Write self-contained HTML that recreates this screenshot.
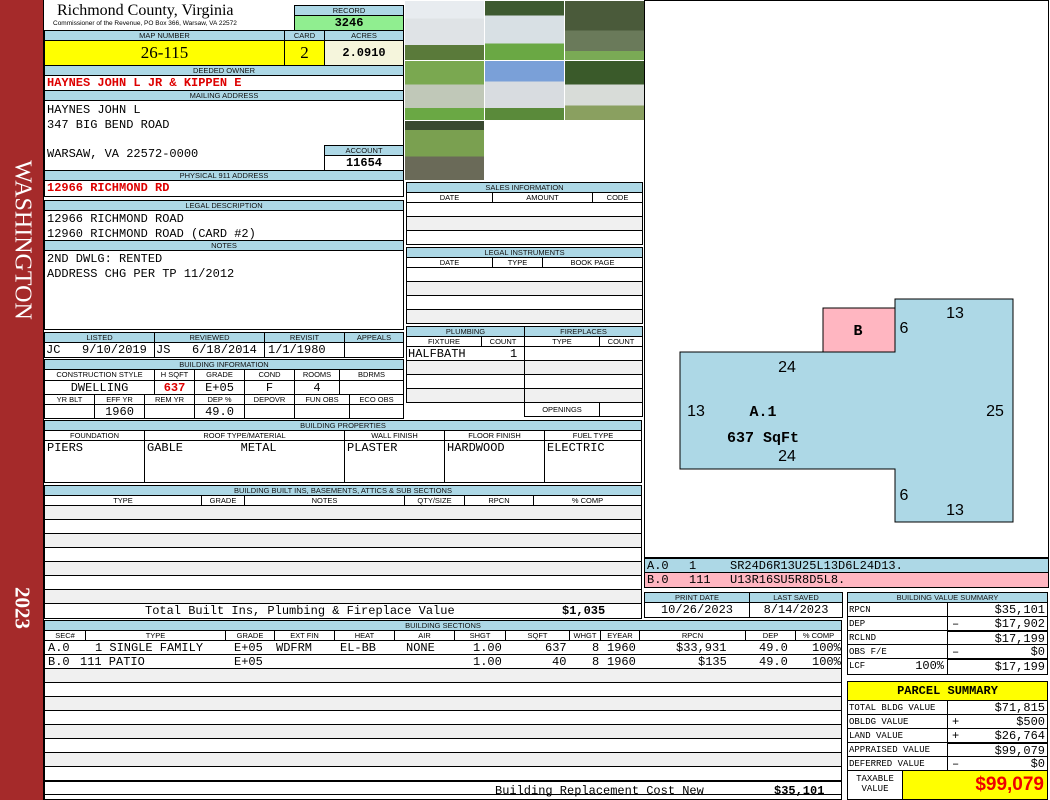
<!DOCTYPE html>
<html><head><meta charset="utf-8"><style>
*{margin:0;padding:0;box-sizing:border-box}
body{width:1050px;height:800px;position:relative;background:#fff;overflow:hidden;font-family:"Liberation Sans",sans-serif}
div{position:absolute}
.b{border:1px solid #000;background:#fff}
.h{background:#add8e6;border:1px solid #000;font-size:7.5px;text-align:center;line-height:9px;color:#111;white-space:nowrap;overflow:hidden}
.m{font-family:"Liberation Mono",monospace;font-size:12px;white-space:nowrap;line-height:14px}
.s{font-size:7.5px;text-align:center;line-height:10px;white-space:nowrap;overflow:hidden;border:1px solid #000;background:#fff}
.r{color:#d00;font-weight:bold}
.g{background:#f0f0f0}
</style></head><body>
<!-- sidebar -->
<div style="left:0;top:0;width:44px;height:800px;background:#a52a2a;border-right:1px solid #000"></div>
<div style="left:22px;top:240px;transform:translate(-50%,-50%) rotate(90deg);color:#fff;font-family:'Liberation Serif',serif;font-size:24px;white-space:nowrap">WASHINGTON</div>
<div style="left:22px;top:608px;transform:translate(-50%,-50%) rotate(90deg);color:#fff;font-family:'Liberation Serif',serif;font-size:21px;font-weight:bold">2023</div>

<!-- header -->
<div style="left:57px;top:2px;font-family:'Liberation Serif',serif;font-size:16px;line-height:18px">Richmond County, Virginia</div>
<div style="left:53px;top:20px;font-size:6.5px;line-height:8px">Commissioner of the Revenue, PO Box 366, Warsaw, VA 22572</div>
<div class="h" style="left:294px;top:5px;width:110px;height:11px">RECORD</div>
<div class="m" style="left:294px;top:15px;width:110px;height:16px;background:#90ee90;border:1px solid #000;text-align:center;font-weight:bold;line-height:14px">3246</div>
<div class="h" style="left:44px;top:30px;width:241px;height:11px">MAP NUMBER</div>
<div class="h" style="left:284px;top:30px;width:41px;height:11px">CARD</div>
<div class="h" style="left:324px;top:30px;width:80px;height:11px">ACRES</div>
<div style="left:44px;top:40px;width:241px;height:26px;background:#ffff00;border:1px solid #000;font-family:'Liberation Serif',serif;font-size:17px;text-align:center;line-height:24px">26-115</div>
<div style="left:284px;top:40px;width:41px;height:26px;background:#ffff00;border:1px solid #000;font-family:'Liberation Serif',serif;font-size:17px;text-align:center;line-height:24px">2</div>
<div class="m" style="left:324px;top:40px;width:80px;height:26px;background:#f5f5dc;border:1px solid #000;text-align:center;font-weight:bold;line-height:24px">2.0910</div>
<div class="h" style="left:44px;top:65px;width:360px;height:11px">DEEDED OWNER</div>
<div class="b m r" style="left:44px;top:75px;width:360px;height:16px;padding-left:2px">HAYNES JOHN L JR &amp; KIPPEN E</div>
<div class="h" style="left:44px;top:90px;width:360px;height:11px">MAILING ADDRESS</div>
<div class="b" style="left:44px;top:100px;width:360px;height:71px"></div>
<div class="m" style="left:47px;top:103px">HAYNES JOHN L</div>
<div class="m" style="left:47px;top:118px">347 BIG BEND ROAD</div>
<div class="m" style="left:47px;top:147px">WARSAW, VA 22572-0000</div>
<div class="h" style="left:324px;top:145px;width:80px;height:11px">ACCOUNT</div>
<div class="b m" style="left:324px;top:155px;width:80px;height:16px;text-align:center;font-weight:bold">11654</div>
<div class="h" style="left:44px;top:170px;width:360px;height:11px">PHYSICAL 911 ADDRESS</div>
<div class="b m r" style="left:44px;top:180px;width:360px;height:17px;padding-left:2px">12966 RICHMOND RD</div>
<div class="h" style="left:44px;top:200px;width:360px;height:11px">LEGAL DESCRIPTION</div>
<div class="b" style="left:44px;top:210px;width:360px;height:31px"></div>
<div class="m" style="left:47px;top:212px">12966 RICHMOND ROAD</div>
<div class="m" style="left:47px;top:227px">12960 RICHMOND ROAD (CARD #2)</div>
<div class="h" style="left:44px;top:240px;width:360px;height:11px">NOTES</div>
<div class="b" style="left:44px;top:250px;width:360px;height:80px"></div>
<div class="m" style="left:47px;top:252px">2ND DWLG: RENTED</div>
<div class="m" style="left:47px;top:267px">ADDRESS CHG PER TP 11/2012</div>

<!-- listed -->
<div class="h" style="left:44px;top:332px;width:111px;height:11px">LISTED</div>
<div class="h" style="left:154px;top:332px;width:111px;height:11px">REVIEWED</div>
<div class="h" style="left:264px;top:332px;width:81px;height:11px">REVISIT</div>
<div class="h" style="left:344px;top:332px;width:60px;height:11px">APPEALS</div>
<div class="b m" style="left:44px;top:342px;width:111px;height:16px;padding-left:1px">JC&nbsp;&nbsp;&nbsp;9/10/2019</div>
<div class="b m" style="left:154px;top:342px;width:111px;height:16px;padding-left:1px">JS&nbsp;&nbsp;&nbsp;6/18/2014</div>
<div class="b m" style="left:264px;top:342px;width:81px;height:16px;padding-left:3px">1/1/1980</div>
<div class="b" style="left:344px;top:342px;width:60px;height:16px"></div>
<div class="h" style="left:44px;top:359px;width:360px;height:11px">BUILDING INFORMATION</div>
<div class="s" style="left:44px;top:369px;width:111px;height:12px">CONSTRUCTION STYLE</div>
<div class="s" style="left:154px;top:369px;width:41px;height:12px">H SQFT</div>
<div class="s" style="left:194px;top:369px;width:51px;height:12px">GRADE</div>
<div class="s" style="left:244px;top:369px;width:51px;height:12px">COND</div>
<div class="s" style="left:294px;top:369px;width:46px;height:12px">ROOMS</div>
<div class="s" style="left:339px;top:369px;width:65px;height:12px">BDRMS</div>
<div class="b m" style="left:44px;top:380px;width:111px;height:15px;text-align:center">DWELLING</div>
<div class="b m r" style="left:154px;top:380px;width:41px;height:15px;text-align:center">637</div>
<div class="b m" style="left:194px;top:380px;width:51px;height:15px;text-align:center">E+05</div>
<div class="b m" style="left:244px;top:380px;width:51px;height:15px;text-align:center">F</div>
<div class="b m" style="left:294px;top:380px;width:46px;height:15px;text-align:center">4</div>
<div class="b" style="left:339px;top:380px;width:65px;height:15px"></div>
<div class="s" style="left:44px;top:394px;width:51px;height:11px">YR BLT</div>
<div class="s" style="left:94px;top:394px;width:51px;height:11px">EFF YR</div>
<div class="s" style="left:144px;top:394px;width:51px;height:11px">REM YR</div>
<div class="s" style="left:194px;top:394px;width:51px;height:11px">DEP %</div>
<div class="s" style="left:244px;top:394px;width:51px;height:11px">DEPOVR</div>
<div class="s" style="left:294px;top:394px;width:56px;height:11px">FUN OBS</div>
<div class="s" style="left:349px;top:394px;width:55px;height:11px">ECO OBS</div>
<div class="b" style="left:44px;top:404px;width:51px;height:15px"></div>
<div class="b m" style="left:94px;top:404px;width:51px;height:15px;text-align:center">1960</div>
<div class="b" style="left:144px;top:404px;width:51px;height:15px"></div>
<div class="b m" style="left:194px;top:404px;width:51px;height:15px;text-align:center">49.0</div>
<div class="b" style="left:244px;top:404px;width:51px;height:15px"></div>
<div class="b" style="left:294px;top:404px;width:56px;height:15px"></div>
<div class="b" style="left:349px;top:404px;width:55px;height:15px"></div>

<!-- photos -->
<div style="left:405px;top:1px;width:79px;height:59px;background:linear-gradient(#e8ecf0 0 30%,#dfe3e6 30% 75%,#5a7a3a 75%)"></div>
<div style="left:485px;top:1px;width:79px;height:59px;background:linear-gradient(#3e5a30 0 25%,#d8e0e4 25% 72%,#6aa844 72%)"></div>
<div style="left:565px;top:1px;width:79px;height:59px;background:linear-gradient(#4a5a3a 0 50%,#6a7a5a 50% 85%,#7aaa55 85%)"></div>
<div style="left:405px;top:61px;width:79px;height:59px;background:linear-gradient(#7aa850 0 40%,#c0c8b8 40% 80%,#6aa844 80%)"></div>
<div style="left:485px;top:61px;width:79px;height:59px;background:linear-gradient(#7aa0d8 0 35%,#d8dce0 35% 80%,#5a8a3a 80%)"></div>
<div style="left:565px;top:61px;width:79px;height:59px;background:linear-gradient(#3a5a2a 0 40%,#d8dcd8 40% 75%,#8aa060 75%)"></div>
<div style="left:405px;top:121px;width:79px;height:59px;background:linear-gradient(#3a4a30 0 15%,#7aa050 15% 60%,#6a6a58 60%)"></div>

<!-- sales -->
<div class="b" style="left:406px;top:182px;width:237px;height:63px"></div>
<div class="h" style="left:406px;top:182px;width:237px;height:11px">SALES INFORMATION</div>
<div class="s" style="left:406px;top:192px;width:87px;height:11px">DATE</div>
<div class="s" style="left:492px;top:192px;width:101px;height:11px">AMOUNT</div>
<div class="s" style="left:592px;top:192px;width:51px;height:11px">CODE</div>
<div class="b" style="left:406px;top:202px;width:237px;height:15px"></div>
<div class="b g" style="left:406px;top:216px;width:237px;height:15px"></div>
<div class="b" style="left:406px;top:230px;width:237px;height:15px"></div>
<div class="h" style="left:406px;top:247px;width:237px;height:11px">LEGAL INSTRUMENTS</div>
<div class="s" style="left:406px;top:257px;width:87px;height:11px">DATE</div>
<div class="s" style="left:492px;top:257px;width:51px;height:11px">TYPE</div>
<div class="s" style="left:542px;top:257px;width:101px;height:11px">BOOK PAGE</div>
<div class="b" style="left:406px;top:267px;width:237px;height:15px"></div>
<div class="b g" style="left:406px;top:281px;width:237px;height:15px"></div>
<div class="b" style="left:406px;top:295px;width:237px;height:15px"></div>
<div class="b g" style="left:406px;top:309px;width:237px;height:15px"></div>
<!-- plumbing -->
<div class="h" style="left:406px;top:326px;width:119px;height:11px">PLUMBING</div>
<div class="h" style="left:524px;top:326px;width:119px;height:11px">FIREPLACES</div>
<div class="s" style="left:406px;top:336px;width:76px;height:11px">FIXTURE</div>
<div class="s" style="left:481px;top:336px;width:44px;height:11px">COUNT</div>
<div class="s" style="left:524px;top:336px;width:76px;height:11px">TYPE</div>
<div class="s" style="left:599px;top:336px;width:44px;height:11px">COUNT</div>
<div class="b m" style="left:406px;top:346px;width:119px;height:15px;padding-left:1px">HALFBATH</div>
<div class="m" style="left:510px;top:347px">1</div>
<div class="b g" style="left:406px;top:360px;width:119px;height:15px"></div>
<div class="b" style="left:406px;top:374px;width:119px;height:15px"></div>
<div class="b g" style="left:406px;top:388px;width:119px;height:15px"></div>
<div class="b" style="left:524px;top:346px;width:119px;height:15px"></div>
<div class="b g" style="left:524px;top:360px;width:119px;height:15px"></div>
<div class="b" style="left:524px;top:374px;width:119px;height:15px"></div>
<div class="b g" style="left:524px;top:388px;width:119px;height:15px"></div>
<div class="s" style="left:524px;top:402px;width:76px;height:15px;line-height:13px">OPENINGS</div>
<div class="b" style="left:599px;top:402px;width:44px;height:15px"></div>

<!-- building properties -->
<div class="h" style="left:44px;top:420px;width:598px;height:11px">BUILDING PROPERTIES</div>
<div class="s" style="left:44px;top:430px;width:101px;height:11px">FOUNDATION</div>
<div class="s" style="left:144px;top:430px;width:201px;height:11px">ROOF TYPE/MATERIAL</div>
<div class="s" style="left:344px;top:430px;width:101px;height:11px">WALL FINISH</div>
<div class="s" style="left:444px;top:430px;width:101px;height:11px">FLOOR FINISH</div>
<div class="s" style="left:544px;top:430px;width:98px;height:11px">FUEL TYPE</div>
<div class="b m" style="left:44px;top:440px;width:101px;height:43px;padding-left:2px">PIERS</div>
<div class="b m" style="left:144px;top:440px;width:201px;height:43px;padding-left:2px">GABLE&nbsp;&nbsp;&nbsp;&nbsp;&nbsp;&nbsp;&nbsp;&nbsp;METAL</div>
<div class="b m" style="left:344px;top:440px;width:101px;height:43px;padding-left:2px">PLASTER</div>
<div class="b m" style="left:444px;top:440px;width:101px;height:43px;padding-left:2px">HARDWOOD</div>
<div class="b m" style="left:544px;top:440px;width:98px;height:43px;padding-left:2px">ELECTRIC</div>

<!-- built ins -->
<div class="h" style="left:44px;top:485px;width:598px;height:11px">BUILDING BUILT INS, BASEMENTS, ATTICS &amp; SUB SECTIONS</div>
<div class="s" style="left:44px;top:495px;width:158px;height:11px">TYPE</div>
<div class="s" style="left:201px;top:495px;width:44px;height:11px">GRADE</div>
<div class="s" style="left:244px;top:495px;width:161px;height:11px">NOTES</div>
<div class="s" style="left:404px;top:495px;width:61px;height:11px">QTY/SIZE</div>
<div class="s" style="left:464px;top:495px;width:70px;height:11px">RPCN</div>
<div class="s" style="left:533px;top:495px;width:109px;height:11px">% COMP</div>
<div class="b" style="left:44px;top:505px;width:598px;height:113px;background:repeating-linear-gradient(#f0f0f0 0 13px,#000 13px 14px,#fff 14px 27px,#000 27px 28px)"></div>
<div class="b m" style="left:44px;top:603px;width:598px;height:16px;line-height:14px"><span style="position:absolute;left:100px">Total Built Ins, Plumbing &amp; Fireplace Value</span><span style="position:absolute;left:517px;font-weight:bold">$1,035</span></div>

<!-- building sections -->
<div class="h" style="left:44px;top:620px;width:798px;height:11px">BUILDING SECTIONS</div>
<div class="s" style="left:44px;top:630px;width:42px;height:11px">SEC#</div>
<div class="s" style="left:85px;top:630px;width:141px;height:11px">TYPE</div>
<div class="s" style="left:225px;top:630px;width:50px;height:11px">GRADE</div>
<div class="s" style="left:274px;top:630px;width:61px;height:11px">EXT FIN</div>
<div class="s" style="left:334px;top:630px;width:61px;height:11px">HEAT</div>
<div class="s" style="left:394px;top:630px;width:61px;height:11px">AIR</div>
<div class="s" style="left:454px;top:630px;width:52px;height:11px">SHGT</div>
<div class="s" style="left:505px;top:630px;width:65px;height:11px">SQFT</div>
<div class="s" style="left:569px;top:630px;width:32px;height:11px">WHGT</div>
<div class="s" style="left:600px;top:630px;width:40px;height:11px">EYEAR</div>
<div class="s" style="left:639px;top:630px;width:107px;height:11px">RPCN</div>
<div class="s" style="left:745px;top:630px;width:51px;height:11px">DEP</div>
<div class="s" style="left:795px;top:630px;width:47px;height:11px">% COMP</div>
<div class="b" style="left:44px;top:640px;width:798px;height:160px;background:repeating-linear-gradient(#fff 0 13px,#000 13px 14px)"></div>
<div class="b" style="left:44px;top:668px;width:798px;height:114px;background:repeating-linear-gradient(#f0f0f0 0 13px,#000 13px 14px,#fff 14px 27px,#000 27px 28px)"></div>
<div class="m" style="left:48px;top:641px">A.0</div>
<div class="m" style="left:95px;top:641px">1 SINGLE FAMILY</div>
<div class="m" style="left:234px;top:641px">E+05</div>
<div class="m" style="left:276px;top:641px">WDFRM</div>
<div class="m" style="left:340px;top:641px">EL-BB</div>
<div class="m" style="left:406px;top:641px">NONE</div>
<div class="m" style="left:473px;top:641px">1.00</div>
<div class="m" style="left:545px;top:641px">637</div>
<div class="m" style="left:592px;top:641px">8</div>
<div class="m" style="left:607px;top:641px">1960</div>
<div class="m" style="left:676px;top:641px">$33,931</div>
<div class="m" style="left:759px;top:641px">49.0</div>
<div class="m" style="left:812px;top:641px">100%</div>
<div class="m" style="left:48px;top:655px">B.0</div>
<div class="m" style="left:80px;top:655px">111 PATIO</div>
<div class="m" style="left:234px;top:655px">E+05</div>
<div class="m" style="left:473px;top:655px">1.00</div>
<div class="m" style="left:552px;top:655px">40</div>
<div class="m" style="left:592px;top:655px">8</div>
<div class="m" style="left:607px;top:655px">1960</div>
<div class="m" style="left:698px;top:655px">$135</div>
<div class="m" style="left:759px;top:655px">49.0</div>
<div class="m" style="left:812px;top:655px">100%</div>
<div class="m" style="left:495px;top:784px">Building Replacement Cost New</div>
<div class="m" style="left:774px;top:784px;font-weight:bold">$35,101</div>

<!-- sketch -->
<div class="b" style="left:644px;top:0;width:405px;height:558px"></div>
<svg style="position:absolute;left:0;top:0" width="1050" height="560">
<polygon points="680,352 895,352 895,299 1013,299 1013,522 895,522 895,469 680,469" fill="#add8e6" stroke="#000" stroke-width="1"/>
<rect x="823" y="308" width="72" height="44" fill="#ffb6c1" stroke="#000"/>
<g font-family="Liberation Sans,sans-serif" font-size="16" fill="#000" text-anchor="middle">
<text x="955" y="318">13</text><text x="904" y="333">6</text><text x="787" y="372">24</text>
<text x="696" y="416">13</text><text x="995" y="416">25</text><text x="787" y="461">24</text>
<text x="904" y="500">6</text><text x="955" y="515">13</text>
</g>
<g font-family="Liberation Mono,monospace" font-size="15" font-weight="bold" text-anchor="middle">
<text x="858" y="335">B</text><text x="763" y="416">A.1</text><text x="763" y="442">637 SqFt</text>
</g>
</svg>
<div class="m" style="left:644px;top:558px;width:405px;height:15px;background:#add8e6;border:1px solid #000"><span style="position:absolute;left:2px">A.0</span><span style="position:absolute;left:44px">1</span><span style="position:absolute;left:85px">SR24D6R13U25L13D6L24D13.</span></div>
<div class="m" style="left:644px;top:572px;width:405px;height:16px;background:#ffb6c1;border:1px solid #000"><span style="position:absolute;left:2px">B.0</span><span style="position:absolute;left:44px">111</span><span style="position:absolute;left:85px">U13R16SU5R8D5L8.</span></div>

<div class="h" style="left:644px;top:592px;width:106px;height:11px">PRINT DATE</div>
<div class="h" style="left:749px;top:592px;width:94px;height:11px">LAST SAVED</div>
<div class="b m" style="left:644px;top:602px;width:106px;height:16px;text-align:center">10/26/2023</div>
<div class="b m" style="left:749px;top:602px;width:94px;height:16px;text-align:center">8/14/2023</div>

<!-- value summary -->
<div class="h" style="left:847px;top:592px;width:201px;height:11px">BUILDING VALUE SUMMARY</div>
<div class="b" style="left:847px;top:602px;width:201px;height:73px"></div>
<div class="b m" style="left:847px;top:602px;width:101px;height:15px;font-size:9px;padding-left:1px">RPCN</div>
<div class="b m" style="left:947px;top:602px;width:101px;height:15px;text-align:right;padding-right:2px">$35,101</div>
<div class="b m" style="left:847px;top:616px;width:101px;height:15px;font-size:9px;padding-left:1px">DEP</div>
<div class="b m" style="left:947px;top:616px;width:101px;height:15px;text-align:right;padding-right:2px"><span style="position:absolute;left:4px">–</span>$17,902</div>
<div class="b m" style="left:847px;top:630px;width:101px;height:15px;font-size:9px;padding-left:1px">RCLND</div>
<div class="b m" style="left:947px;top:630px;width:101px;height:15px;text-align:right;padding-right:2px;border-top:2px solid #000">$17,199</div>
<div class="b m" style="left:847px;top:644px;width:101px;height:15px;font-size:9px;padding-left:1px">OBS F/E</div>
<div class="b m" style="left:947px;top:644px;width:101px;height:15px;text-align:right;padding-right:2px"><span style="position:absolute;left:4px">–</span>$0</div>
<div class="b m" style="left:847px;top:658px;width:101px;height:17px;font-size:9px;padding-left:1px">LCF<span style="position:absolute;right:3px;font-size:12px">100%</span></div>
<div class="b m" style="left:947px;top:658px;width:101px;height:17px;text-align:right;padding-right:2px;border-top:2px solid #000">$17,199</div>

<!-- parcel summary -->
<div style="left:847px;top:681px;width:201px;height:20px;background:#ffff00;border:1px solid #000;font-family:'Liberation Mono',monospace;font-weight:bold;font-size:12px;text-align:center;line-height:18px">PARCEL SUMMARY</div>
<div class="b m" style="left:847px;top:700px;width:101px;height:15px;font-size:9px;padding-left:1px">TOTAL BLDG VALUE</div>
<div class="b m" style="left:947px;top:700px;width:101px;height:15px;text-align:right;padding-right:2px">$71,815</div>
<div class="b m" style="left:847px;top:714px;width:101px;height:15px;font-size:9px;padding-left:1px">OBLDG VALUE</div>
<div class="b m" style="left:947px;top:714px;width:101px;height:15px;text-align:right;padding-right:2px"><span style="position:absolute;left:4px">+</span>$500</div>
<div class="b m" style="left:847px;top:728px;width:101px;height:15px;font-size:9px;padding-left:1px">LAND VALUE</div>
<div class="b m" style="left:947px;top:728px;width:101px;height:15px;text-align:right;padding-right:2px"><span style="position:absolute;left:4px">+</span>$26,764</div>
<div class="b m" style="left:847px;top:742px;width:101px;height:15px;font-size:9px;padding-left:1px">APPRAISED VALUE</div>
<div class="b m" style="left:947px;top:742px;width:101px;height:15px;text-align:right;padding-right:2px;border-top:2px solid #000">$99,079</div>
<div class="b m" style="left:847px;top:756px;width:101px;height:15px;font-size:9px;padding-left:1px">DEFERRED VALUE</div>
<div class="b m" style="left:947px;top:756px;width:101px;height:15px;text-align:right;padding-right:2px"><span style="position:absolute;left:4px">–</span>$0</div>
<div class="b m" style="left:847px;top:770px;width:56px;height:30px;font-size:9px;text-align:center;line-height:10px;padding-top:3px">TAXABLE<br>VALUE</div>
<div style="left:902px;top:770px;width:146px;height:30px;background:#ffff00;border:1px solid #000;color:#e00;font-weight:bold;font-size:19px;text-align:right;padding-right:3px;line-height:28px">$99,079</div>
</body></html>
